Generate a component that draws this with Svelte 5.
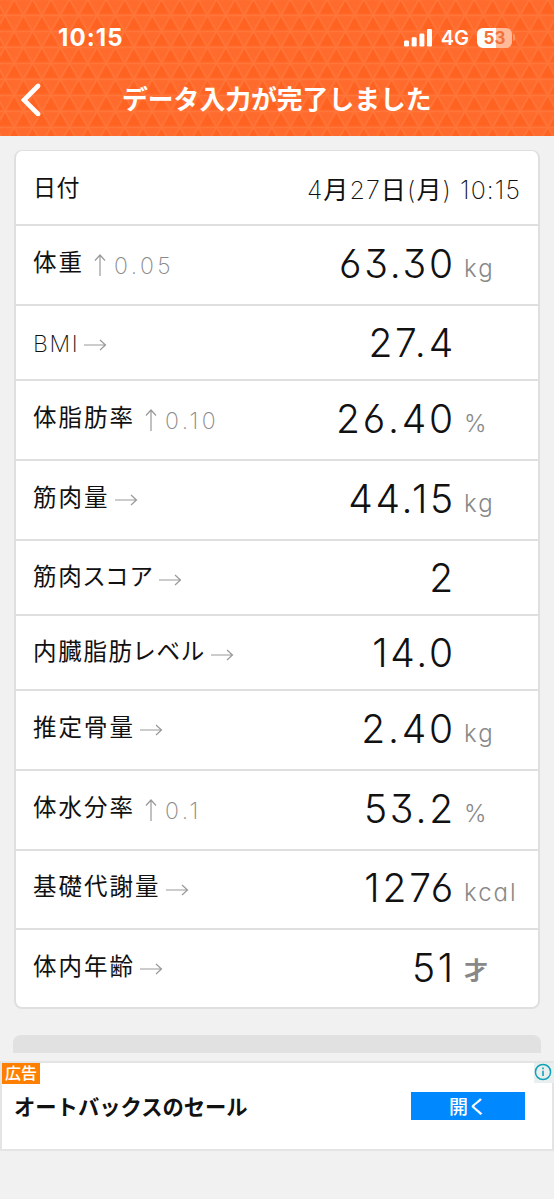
<script>
  const rows = [
    { label: '体重', diff: '0.05', value: '63.30', unit: 'kg', height: 80 },
    { label: 'BMI', value: '27.4', height: 75, latin: true },
    { label: '体脂肪率', diff: '0.10', value: '26.40', unit: '%', height: 80 },
    { label: '筋肉量', value: '44.15', unit: 'kg', height: 80 },
    { label: '筋肉スコア', value: '2', height: 75, kana: true },
    { label: '内臓脂肪レベル', value: '14.0', height: 75, kana: true },
    { label: '推定骨量', value: '2.40', unit: 'kg', height: 80 },
    { label: '体水分率', diff: '0.1', value: '53.2', unit: '%', height: 80 },
    { label: '基礎代謝量', value: '1276', unit: 'kcal', height: 79 },
    { label: '体内年齢', value: '51', unit: '才', height: 78 },
  ];
</script>

<div class="screen">
  <header>
    <svg class="pattern" width="554" height="136">
      <defs>
        <pattern id="tri" width="18.4" height="32" patternUnits="userSpaceOnUse" patternTransform="translate(5 -1)">
          <rect width="18.4" height="32" fill="#ff6b2c" />
          <path class="dark" d="M9.2 2L16 14.5H2.4ZM0 18L6.8 30.5H-6.8ZM18.4 18L25.2 30.5H11.6Z" />
          <path class="lines" d="M0 0.5H18.4M0 16.5H18.4M0 16L9.2 0L18.4 16L9.2 32L0 16" />
        </pattern>
      </defs>
      <rect width="554" height="136" fill="url(#tri)" />
    </svg>
    <div class="status">
      <span class="time">10:15</span>
      <div class="indicators">
        <svg width="29" height="18" viewBox="0 0 29 18" fill="#fff">
          <rect x="0" y="11.5" width="5" height="6" rx="1.3" />
          <rect x="7.7" y="8.3" width="5" height="9.2" rx="1.3" />
          <rect x="15.4" y="4.4" width="5" height="13.1" rx="1.3" />
          <rect x="23" y="0" width="5" height="17.5" rx="1.3" />
        </svg>
        <span class="network">4G</span>
        <div class="battery">53</div>
        <i class="cap"></i>
      </div>
    </div>
    <div class="bar">
      <svg width="24" height="34" viewBox="0 0 24 34">
        <path class="back" d="M21 4L7 18L21 32" />
      </svg>
      <h1>データ入力が完了しました</h1>
    </div>
  </header>

  <main>
    <section class="card">
      <div class="row date">
        <span class="label">日付</span>
        <span class="datetime">4<b>月</b>27<b>日</b>(<b>月</b>) 10:15</span>
      </div>
      {#each rows as row}
        <div class="row" class:short={!row.unit} style="height: {row.height}px">
          <span class="label" class:latin={row.latin} class:kana={row.kana}>{row.label}</span>
          {#if row.diff}
            <svg class="up" width="12" height="24" viewBox="0 0 12 24">
              <path d="M6 23V2M1 7.5L6 2L11 7.5" />
            </svg>
            <span class="diff">{row.diff}</span>
          {:else}
            <svg class="flat" width="23" height="12" viewBox="0 0 23 12">
              <path d="M0 6H21.5M16 1L21.5 6L16 11" />
            </svg>
          {/if}
          <span class="value">{row.value}</span>
          <span class="unit" class:age={row.unit === '才'}>{row.unit ?? ''}</span>
        </div>
      {/each}
    </section>
    <div class="next"></div>
  </main>

  <aside>
    <span class="tag">広告</span>
    <span class="info">
      <svg width="18" height="18" viewBox="0 0 18 18">
        <circle cx="9" cy="9" r="7.6" fill="none" stroke="#10a3b5" stroke-width="1.5" />
        <path d="M9 7.8V13M9 4.6V6.2" stroke="#10a3b5" stroke-width="1.6" />
      </svg>
    </span>
    <strong>オートバックスのセール</strong>
    <button>開く</button>
  </aside>
</div>

<style>
  :global(body) {
    background: #f1f1f1;
  }

  .screen {
    width: 554px;
    height: 1199px;
    overflow: hidden;
    background: #f1f1f1;
    font-family: Inter, "Noto Sans CJK JP", sans-serif;
    font-feature-settings: "cv03", "cv09", "cv11";
    color: #111;
  }

  header {
    position: relative;
    height: 136px;
    color: #fff;
  }

  svg path {
    fill: none;
  }

  .pattern {
    position: absolute;
    inset: 0;
  }

  .pattern .dark {
    fill: #ff6321;
  }

  .pattern .lines {
    stroke: #ff763a;
    stroke-width: 1.4;
  }

  .status {
    position: relative;
    display: flex;
    justify-content: space-between;
    align-items: center;
    height: 75px;
    padding: 0 39px 0 58px;
    box-sizing: border-box;
    font-feature-settings: normal;
  }

  .time {
    font-size: 24px;
    font-weight: 700;
    letter-spacing: 1.1px;
  }

  .indicators {
    display: flex;
    align-items: center;
  }

  .network {
    margin-left: 8px;
    font-size: 20px;
    font-weight: 600;
  }

  .battery {
    width: 35px;
    height: 20px;
    margin-left: 8px;
    border-radius: 6px;
    background: linear-gradient(90deg, #fff 53%, #ffba99 53%);
    color: #f4713a;
    font-size: 17px;
    font-weight: 700;
    line-height: 20px;
    text-align: center;
  }

  .cap {
    width: 2px;
    height: 7px;
    margin-left: 1px;
    border-radius: 0 2px 2px 0;
    background: #ff9a6b;
  }

  .bar {
    position: relative;
    display: flex;
    align-items: center;
    height: 48px;
    padding-left: 17px;
  }

  .back {
    stroke: #fff;
    stroke-width: 4.6;
    stroke-linecap: round;
  }

  h1 {
    margin: 2px 0 0 81px;
    font-size: 25.8px;
    line-height: 50px;
    font-weight: 700;
    white-space: nowrap;
  }

  main {
    height: 925px;
    padding: 14px 14px 0;
    box-sizing: border-box;
  }

  .card {
    width: 526px;
    height: 859px;
    box-sizing: border-box;
    border: 2px solid #dfdfdf;
    border-top-width: 1px;
    border-radius: 8px;
    background: #fff;
  }

  .row {
    display: flex;
    align-items: center;
    box-sizing: border-box;
    padding: 0 0 5px 17px;
    border-bottom: 2px solid #dfdfdf;
  }

  .row:last-child {
    border-bottom: 0;
  }

  .date {
    height: 75px;
    padding: 0 17px 0 17px;
    justify-content: space-between;
  }

  .short {
    padding-bottom: 1px;
  }

  .label {
    font-size: 23.5px;
    line-height: 36px;
    letter-spacing: 2px;
    white-space: nowrap;
    font-feature-settings: "palt";
  }

  .date .label {
    font-size: 23px;
    letter-spacing: 0.5px;
  }

  .kana {
    letter-spacing: 1.7px;
  }

  .latin {
    margin-top: 3px;
    font-weight: 200;
    font-size: 23px;
    letter-spacing: 1.6px;
  }

  .datetime {
    font-size: 25px;
    font-weight: 200;
    letter-spacing: 1.1px;
    white-space: nowrap;
  }

  .datetime b {
    font-weight: 400;
  }

  .up,
  .flat {
    flex: none;
    stroke: #999;
    stroke-width: 1.2;
  }

  .up {
    margin: 5px 0 0 10px;
  }

  .flat {
    margin: 5px 0 0 5px;
  }

  .diff {
    margin: 7px 0 0 8px;
    color: #888;
    font-size: 23px;
    font-weight: 200;
    letter-spacing: 3.4px;
  }

  .value {
    margin: 1px 0 0 auto;
    font-size: 39px;
    font-weight: 300;
    letter-spacing: 2.8px;
  }

  .unit {
    width: 74px;
    margin: 11px 0 0 8px;
    color: #888;
    font-size: 24px;
    font-weight: 300;
    letter-spacing: 2px;
  }

  .age {
    margin-top: 3px;
    font-weight: 700;
  }

  .next {
    height: 18px;
    margin: 26px -1px 0;
    border-radius: 8px 8px 0 0;
    background: #e1e1e1;
  }

  aside {
    position: relative;
    display: flex;
    justify-content: space-between;
    align-items: center;
    height: 90px;
    padding: 0 27px 0 12px;
    box-sizing: border-box;
    border: 2px solid #e4e4e4;
    background: #fff;
  }

  .tag {
    position: absolute;
    top: 0;
    left: 0;
    width: 38px;
    height: 21px;
    background: #ff8000;
    color: #fff;
    font-size: 16px;
    font-weight: 500;
    line-height: 20px;
    text-align: center;
  }

  .info {
    position: absolute;
    top: 0;
    right: -2px;
    width: 20px;
    height: 20px;
    background: #e9eeee;
  }

  strong {
    margin-top: -2px;
    font-size: 21.3px;
  }

  button {
    width: 114px;
    height: 28px;
    padding: 0;
    border: 0;
    background: #0088ff;
    color: #fff;
    font: 500 19px/28px "Noto Sans CJK JP", sans-serif;
  }
</style>
